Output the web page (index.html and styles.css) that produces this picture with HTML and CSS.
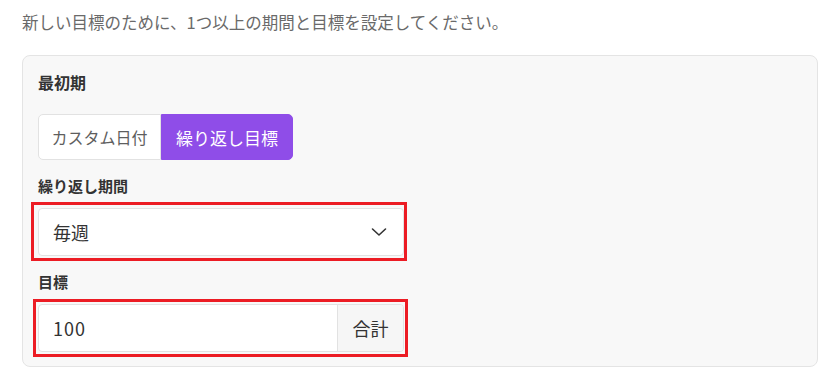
FILE: index.html
```html
<!DOCTYPE html>
<html lang="ja">
<head>
<meta charset="utf-8">
<link rel="stylesheet" href="styles.css">
</head>
<body>
<p class="intro">新しい目標のために、1つ以上の期間と目標を設定してください。</p>
<section class="card">
  <div class="card-title">最初期</div>
  <div class="toggle">
    <button class="seg">カスタム日付</button>
    <button class="seg active">繰り返し目標</button>
  </div>
  <div class="field-label">繰り返し期間</div>
  <div class="hl-wrap">
    <div class="select">
      <span>毎週</span>
      <svg class="chev" width="16" height="10" viewBox="0 0 16 10"><path d="M1.5 2 L8 8 L14.5 2" fill="none" stroke="#333" stroke-width="1.6" stroke-linecap="round" stroke-linejoin="round"/></svg>
    </div>
    <div class="hl hl-a"></div>
  </div>
  <div class="field-label">目標</div>
  <div class="hl-wrap">
    <div class="input-group">
      <span class="value">100</span>
      <span class="addon">合計</span>
    </div>
    <div class="hl hl-b"></div>
  </div>
</section>
</body>
</html>
```
FILE: styles.css
```css
* { box-sizing: border-box; }
html, body { margin: 0; background: #fff; }
body {
  padding: 10px 13px 0 22px;
  font-family: "Noto Sans CJK JP", "Noto Sans", sans-serif;
  color: #333;
}
.intro {
  margin: 0;
  font-size: 16.5px;
  line-height: 24px;
  color: #6a6a6a;
}
.card {
  margin-top: 21px;
  background: #f8f8f8;
  border: 1px solid #e4e4e4;
  border-radius: 8px;
  padding: 16px 15px 14px 15px;
}
.card-title {
  font-size: 16px;
  font-weight: 700;
  line-height: 20px;
  color: #333;
}
.toggle {
  display: flex;
  margin-top: 22px;
  width: fit-content;
  height: 46px;
}
.seg {
  font-family: inherit;
  font-size: 16px;
  height: 46px;
  width: 123px;
  padding: 0;
  text-align: center;
  border: 1px solid #e2e2e2;
  background: #fff;
  color: #5e5e5e;
  border-radius: 5px 0 0 5px;
}
.seg.active {
  width: 132px;
  font-size: 17px;
  background: #8f4de8;
  border-color: #8f4de8;
  color: #fff;
  border-radius: 0 5px 5px 0;
}
.field-label {
  margin-top: 16px;
  font-size: 15px;
  font-weight: 700;
  line-height: 20px;
  color: #333;
}
.hl-wrap {
  position: relative;
  margin-top: 12px;
  width: 366px;
}
.select, .input-group {
  display: flex;
  align-items: center;
  height: 48px;
  background: #fff;
  border: 1px solid #e2e2e2;
  border-radius: 4px;
  font-size: 18px;
  color: #333;
}
.select {
  justify-content: space-between;
  padding: 0 16px 0 14px;
}
.chev { display: block; }
.input-group { overflow: hidden; }
.value {
  flex: 1;
  padding-left: 14px;
  font-size: 18px;
  letter-spacing: 1px;
}
.addon {
  height: 100%;
  width: 66px;
  display: flex;
  align-items: center;
  justify-content: center;
  background: #f6f6f6;
  border-left: 1px solid #e2e2e2;
}
.hl {
  position: absolute;
  border: 3px solid #ec1c24;
  pointer-events: none;
}
.hl-a { left: -7px; top: -6px; width: 376px; height: 59px; }
.hl-b { left: -5px; top: -5px; width: 375px; height: 58px; }
```
